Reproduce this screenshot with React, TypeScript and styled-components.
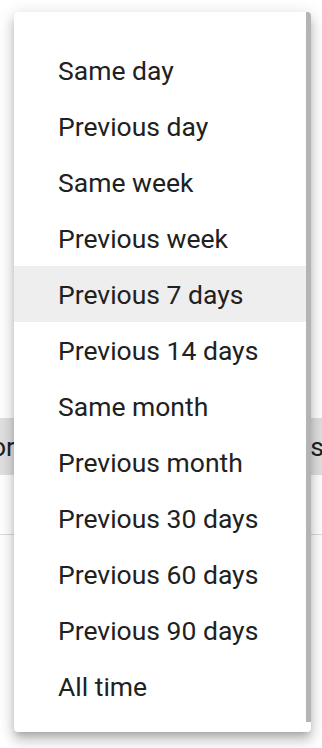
import React, { FC } from 'react';
import styled, { createGlobalStyle } from 'styled-components';

const GlobalStyle = createGlobalStyle`
  html, body {
    margin: 0;
    padding: 0;
    background: #ffffff;
  }
  body {
    font-family: Roboto, "Liberation Sans", Arial, sans-serif;
    color: #212121;
  }
`;

const Page = styled.div`
  position: relative;
  width: 322px;
  height: 748px;
  overflow: hidden;
  background: #ffffff;
`;

const Backdrop = styled.div`
  display: flex;
  flex-direction: column;
  padding-top: 418px;
`;

const ToolBar = styled.div`
  display: flex;
  justify-content: space-between;
  align-items: center;
  height: 57px;
  background: #e0e0e0;
  font-size: 26.5px;
  color: #212121;
  overflow: hidden;
`;

const ToolLabel = styled.span<{ $side: 'left' | 'right' }>`
  white-space: nowrap;
  margin-left: ${({ $side }) => ($side === 'left' ? '-9px' : '0')};
  margin-right: ${({ $side }) => ($side === 'right' ? '-2px' : '0')};
`;

const Divider = styled.div`
  height: 1px;
  margin-top: 59px;
  background: #dcdcdc;
`;

const Menu = styled.div`
  position: absolute;
  top: 12px;
  left: 14px;
  width: 297px;
  height: 720px;
  display: flex;
  background: #ffffff;
  border-radius: 4px;
  box-shadow: 0 5px 6px -3px rgba(0, 0, 0, 0.2), 0 9px 12px 1px rgba(0, 0, 0, 0.14),
    0 3px 16px 2px rgba(0, 0, 0, 0.12);
  overflow: hidden;
`;

const List = styled.ul`
  flex: 1;
  list-style: none;
  margin: 0;
  padding: 30px 0 0;
`;

const Item = styled.li<{ $active?: boolean }>`
  display: flex;
  align-items: center;
  height: 56px;
  padding: 0 0 0 44px;
  box-sizing: border-box;
  font-size: 26.5px;
  color: #212121;
  background: ${({ $active }) => ($active ? '#eeeeee' : 'transparent')};
  white-space: nowrap;
`;

const ScrollTrack = styled.div`
  width: 5px;
  display: flex;
  flex-direction: column;
`;

const ScrollThumb = styled.div`
  height: 710px;
  background: #b4b4b4;
`;

const options = [
  'Same day',
  'Previous day',
  'Same week',
  'Previous week',
  'Previous 7 days',
  'Previous 14 days',
  'Same month',
  'Previous month',
  'Previous 30 days',
  'Previous 60 days',
  'Previous 90 days',
  'All time',
];

const App: FC = () => {
  const selected = 'Previous 7 days';

  return (
    <>
      <GlobalStyle />
      <Page>
        <Backdrop>
          <ToolBar>
            <ToolLabel $side="left">or</ToolLabel>
            <ToolLabel $side="right">s</ToolLabel>
          </ToolBar>
          <Divider />
        </Backdrop>
        <Menu>
          <List>
            {options.map((option) => (
              <Item key={option} $active={option === selected}>
                {option}
              </Item>
            ))}
          </List>
          <ScrollTrack>
            <ScrollThumb />
          </ScrollTrack>
        </Menu>
      </Page>
    </>
  );
};

export default App;
